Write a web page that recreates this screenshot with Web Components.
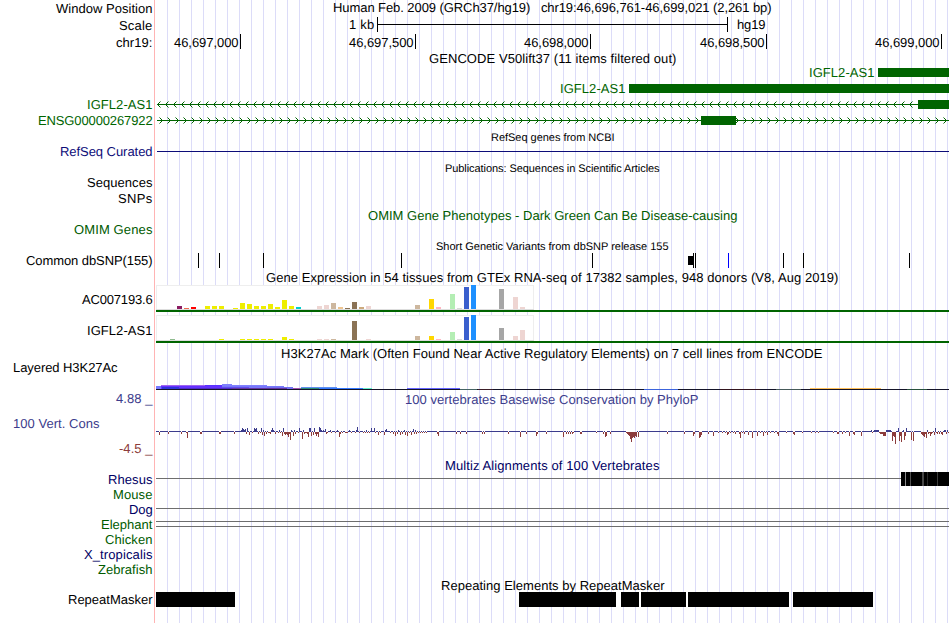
<!DOCTYPE html>
<html lang="en">
<head>
<meta charset="utf-8">
<title>Genome Browser</title>
<style>
  body {
    margin: 0;
    background: #fff;
    font-family: "Liberation Sans", Arial, sans-serif;
    font-size: 13px;
    color: #000;
  }
</style>
</head>
<body>
<genome-browser></genome-browser>

<script>
const LEFT = 155;
const RIGHT = 949;
const GREEN = '#006400';
const NAVY = '#0c0c78';

const rect = (x, y, w, h, fill = '#000') =>
  `<rect x="${x}" y="${y}" width="${w}" height="${h}" fill="${fill}"/>`;

// text fitted between two x coordinates, on one baseline
class FitText extends HTMLElement {

  constructor() {
    super();
    this.attachShadow({mode: 'open'});
  }

  connectedCallback() {
    const small = this.hasAttribute('small');
    this.shadowRoot.innerHTML = `
      <style>
        :host {
          display: block;
          height: 0;
          font-size: ${small ? 11 : 13}px;
          line-height: ${small ? 12 : 15}px;
          text-rendering: geometricPrecision;
        }
        span {
          display: block;
          width: max-content;
          white-space: pre;
        }
      </style>
      <span><slot></slot></span>
    `;
    const span = this.shadowRoot.querySelector('span');
    const width = Number(this.getAttribute('width'));
    const natural = span.getBoundingClientRect().width;
    span.style.letterSpacing = `${(width - natural) / this.textContent.length}px`;
  }
}

customElements.define('fit-text', FitText);


class TrackRow extends HTMLElement {

  constructor() {
    super();
    this.attachShadow({mode: 'open'});
  }

  set track(track) {
    this._track = track;
    this.render();
  }

  text({t, x, to, base, color = '#000', small}, origin) {
    const top = base - (small ? 9 : 12) - this._track.top;
    return `<fit-text ${small ? 'small' : ''} width="${to - x + .5}"
      style="margin: ${top}px 0 0 ${x - origin}px; color: ${color}">${t}</fit-text>`;
  }

  render() {
    const {top, height, label, texts = [], art = ''} = this._track;
    this.shadowRoot.innerHTML = `
      <style>
        :host {
          display: grid;
          grid-template-columns: ${LEFT}px ${RIGHT - LEFT}px;
          height: ${height}px;
        }
        .label {
          display: grid;
          align-content: start;
        }
        .data {
          display: grid;
          align-content: start;
        }
        .data > * {
          grid-area: 1 / 1;
        }
        svg {
          display: block;
          overflow: visible;
        }
      </style>
      <div class="label">${label ? this.text(label, 0) : ''}</div>
      <div class="data">
        <svg width="${RIGHT - LEFT}" height="${height}" viewBox="${LEFT} ${top} ${RIGHT - LEFT} ${height}" shape-rendering="crispEdges">${art}</svg>
        ${texts.map(item => this.text(item, LEFT)).join('')}
      </div>
    `;
  }
}

customElements.define('track-row', TrackRow);


function chevrons(from, to, y, dir) {
  let d = '';
  for (let x = from; x < to; x += 8) {
    d += `M${x + 3 * -dir + .5} ${y - 2.5}L${x + .5} ${y + .5}L${x + 3 * -dir + .5} ${y + 3.5}`;
  }
  return `<path d="${d}" fill="none" stroke="${GREEN}" shape-rendering="auto"/>`;
}

function expression(top, base, bars) {
  return rect(156, top, 378, base - top + 1, '#eee') +
    rect(157, top + 1, 376, base - top - 1, '#fff') +
    rect(156, base, 378, 1, '#ddd') +
    bars.map(([i, h, color]) => rect(156 + i * 7, base - h, 5, h, color)).join('') +
    rect(156, base + 1, 793, 2, GREEN);
}

const Y = '#eeee00', PINK = '#eed5d2', TAN = '#cdb79e', BROWN = '#8b7355';

const ac007 = [
  [3, 3, '#8b1c62'], [4, 1, '#ee6a50'], [5, 2, '#ff0000'], [7, 3, Y], [8, 3, Y], [9, 3, Y],
  [11, 1, Y], [12, 6, Y], [13, 5, Y], [14, 3, Y], [15, 3, Y], [16, 5, Y], [17, 2, Y], [18, 9, Y],
  [19, 3, Y], [20, 2, '#00cdcd'], [23, 3, PINK], [24, 4, PINK], [25, 6, TAN], [26, 2, '#eec591'],
  [27, 1, BROWN], [28, 7, BROWN], [29, 2, '#cdaa7d'], [30, 3, PINK], [37, 4, TAN], [39, 10, '#ffd700'],
  [40, 2, '#ffb6c1'], [42, 15, '#b4eeb4'], [43, 1, '#d9d9d9'], [44, 22, '#3a5fcd'], [45, 24, '#1e90ff'],
  [49, 20, '#a6a6a6'], [51, 12, PINK], [52, 2, PINK]
];

const igfl2 = [
  [2, 1, '#8fbc8f'], [9, 1, Y], [12, 1, Y], [13, 1, Y], [14, 1, Y], [15, 1, Y], [16, 1, Y], [18, 3, Y],
  [19, 1, Y], [23, 1, PINK], [24, 1, PINK], [25, 1, TAN], [28, 19, BROWN], [30, 1, PINK], [37, 4, TAN],
  [39, 4, '#ffd700'], [40, 1, '#ffb6c1'], [42, 8, '#b4eeb4'], [43, 1, '#d9d9d9'], [44, 23, '#3a5fcd'],
  [45, 25, '#1e90ff'], [49, 12, '#a6a6a6'], [51, 4, PINK], [52, 10, PINK]
];

// "x:height" pairs for the conservation wiggle
const up = `241:1 242:3 243:2 244:1 245:2 247:3 254:3 255:2 256:3 261:3 263:1 271:1 272:3 273:1 279:1 283:3
  291:1 294:1 299:3 303:1 309:3 310:3 314:3 319:4 320:3 321:1 323:1 325:2 330:1 337:1 349:1 356:1 357:4 366:1
  371:3 374:3 385:1 386:2 398:1 404:1 413:2 415:1 871:1 874:1 875:1 876:1 877:1 878:1 886:1 887:1 888:1 889:1
  890:1 898:3 903:1 906:3 927:1 935:3 944:1 945:1 947:1`;

const down = `159:3 168:2 181:2 186:1 187:6 200:2 201:2 219:2 220:2 234:2 246:2 249:3 252:1 258:2 260:1 262:3
  264:4 266:2 268:1 269:1 270:2 275:2 278:1 280:1 282:4 284:2 285:3 286:2 287:3 288:5 289:2 290:8 293:4 295:2
  298:1 302:7 304:2 305:1 306:1 307:2 308:5 311:4 313:3 315:2 316:4 317:2 318:5 326:2 327:1 331:1 335:1 339:5
  340:2 342:1 345:1 346:1 347:1 351:1 355:1 359:1 363:1 365:1 367:1 369:1 375:1 378:3 380:1 384:3 390:1 393:2
  395:4 397:2 400:3 402:2 405:3 407:4 409:1 411:3 414:2 416:2 418:1 420:1 422:1 424:1 426:1 437:2 438:4 456:2
  460:2 466:2 482:2 484:2 508:2 520:5 526:2 536:4 537:2 546:2 563:5 566:2 568:2 570:2 572:2 573:1 580:2 581:2
  596:1 603:2 605:5 606:4 610:2 626:1 627:2 628:3 629:4 630:7 631:10 632:6 633:5 634:6 635:4 636:5 638:5 667:2
  684:2 693:4 694:2 699:6 700:5 701:3 708:2 713:4 718:1 722:1 725:1 727:3 728:2 730:1 733:1 735:2 739:2 740:6
  742:1 744:2 748:3 752:6 757:4 760:1 763:4 765:1 767:3 770:1 774:1 777:2 778:4 786:1 793:2 794:3 802:1 811:1
  815:1 818:1 833:1 837:2 838:2 842:2 845:1 849:4 853:2 854:3 861:4 872:1 879:1 880:2 881:2 882:2 883:4 884:4
  885:4 892:9 893:4 894:5 895:12 899:9 900:4 901:10 904:8 905:4 911:8 913:9 921:2 922:3 923:4 924:5 925:2
  926:6 928:2 929:1 930:4 931:2 932:1 934:3 936:1 937:2 939:2 941:2 942:3 946:2 948:1`;

function conservation() {
  const blue = '#3c3c8c', red = '#8c3c3c';
  const parse = list => new Map(list.trim().split(/\s+/).map(pair => pair.split(':').map(Number)));
  const ups = parse(up), downs = parse(down);
  let art = '';
  for (let x = 156; x < RIGHT; x++) {
    const h = ups.get(x) || 0;
    if (downs.has(x)) {
      art += rect(x, 432, 1, downs.get(x), red);
    } else {
      art += rect(x, 431 - h, 1, h + 1, blue);
    }
  }
  return art;
}

const tick = x => rect(x, 34, 1, 15);
const snp = (x, color) => rect(x, 253, 1, 15, color);
const label = (t, x, base, color, to = 152) => ({t, x, to, base, color});
const title = (t, x, to, base, color, small) => ({t, x, to, base, color, small});
const SPECIES_A = '#000064', SPECIES_B = '#005a00', BLUE = '#3c3c8c';

const tracks = [
  {height: 17, label: label('Window Position', 56, 13),
    texts: [title('Human Feb. 2009 (GRCh37/hg19)   chr19:46,696,761-46,699,021 (2,261 bp)', 333, 771, 12)]},
  {height: 17, label: label('Scale', 119, 30),
    texts: [title('1 kb', 349, 374, 29), title('hg19', 737, 765, 29)],
    art: rect(377, 17, 1, 15) + rect(377, 24, 351, 1) + rect(727, 17, 1, 15)},
  {height: 17, label: label('chr19:', 116, 47),
    texts: [
      title('46,697,000', 174, 238, 47), title('46,697,500', 349, 413, 47), title('46,698,000', 524, 588, 47),
      title('46,698,500', 700, 764, 47), title('46,699,000', 875, 939, 47)
    ],
    art: [240, 415, 590, 766, 941].map(tick).join('')},
  {height: 13, texts: [title('GENCODE V50lift37 (11 items filtered out)', 429, 676, 63)]},
  {height: 16, texts: [title('IGFL2-AS1', 809, 874, 77, GREEN)], art: rect(878, 68, 71, 9, GREEN)},
  {height: 16, texts: [title('IGFL2-AS1', 560, 625, 93, GREEN)], art: rect(629, 84, 320, 9, GREEN)},
  {height: 16, label: label('IGFL2-AS1', 87, 109, GREEN),
    art: rect(157, 104, 792, 1, GREEN) + chevrons(157, 915, 104, -1) + rect(918, 100, 31, 9, GREEN)},
  {height: 16, label: label('ENSG00000267922', 38, 125, GREEN),
    art: rect(157, 120, 792, 1, GREEN) + chevrons(162, 949, 120, 1) + rect(701, 116, 35, 9, GREEN)},
  {height: 16, texts: [title('RefSeq genes from NCBI', 491, 614, 141, '#000', true)]},
  {height: 16, label: label('RefSeq Curated', 60, 156, NAVY), art: rect(157, 151, 792, 1, NAVY)},
  {height: 15, texts: [title('Publications: Sequences in Scientific Articles', 445, 659, 172, '#000', true)]},
  {height: 16, label: label('Sequences', 87, 187)},
  {height: 16, label: label('SNPs', 118, 203)},
  {height: 16, texts: [title('OMIM Gene Phenotypes - Dark Green Can Be Disease-causing', 368, 737, 220, SPECIES_B)]},
  {height: 15, label: label('OMIM Genes', 74, 234, SPECIES_B)},
  {height: 15, texts: [title('Short Genetic Variants from dbSNP release 155', 436, 668, 250, '#000', true)]},
  {height: 16, label: label('Common dbSNP(155)', 26, 265),
    art: [198, 219, 263, 401, 592, 693, 695, 783, 803, 909].map(x => snp(x)).join('') +
      snp(728, '#0000ff') + rect(688, 256, 6, 9)},
  {height: 16, texts: [title('Gene Expression in 54 tissues from GTEx RNA-seq of 17382 samples, 948 donors (V8, Aug 2019)', 266, 838, 282)]},
  {height: 30, label: label('AC007193.6', 82, 304), art: expression(285, 309, ac007)},
  {height: 31, label: label('IGFL2-AS1', 87, 335), art: expression(315, 340, igfl2)},
  {height: 16, texts: [title('H3K27Ac Mark (Often Found Near Active Regulatory Elements) on 7 cell lines from ENCODE', 281, 822, 358)]},
  {height: 32, label: label('Layered H3K27Ac', 13, 372, '#000', 117),
    art: rect(156, 386, 6, 3, '#7878ff') + rect(161, 385, 44, 1, '#a064f0') + rect(161, 386, 62, 3, '#6432ff') +
      rect(205, 385, 18, 1, '#5a32ff') + rect(222, 384, 10, 2, '#8080ff') + rect(232, 385, 35, 2, '#8080ff') +
      rect(222, 386, 62, 2, '#7878fa') + rect(267, 387, 26, 2, '#7070f0') + rect(162, 387, 17, 2, '#3232dc') +
      rect(179, 388, 53, 1, '#5028c8') + rect(222, 387, 27, 1, '#6050f0') + rect(232, 388, 55, 1, '#6432a0') +
      rect(293, 388, 8, 1, '#a050b0') + rect(301, 387, 36, 1, '#6090f0') + rect(301, 388, 18, 1, '#288c78') +
      rect(319, 388, 44, 1, '#3278ff') + rect(363, 388, 9, 1, '#64f0c8') + rect(407, 388, 53, 1, '#6464ff') +
      rect(156, 389, 793, 1, '#141428') + rect(460, 389, 17, 1, '#466464') + rect(478, 389, 15, 1, '#3c1e28') +
      rect(644, 389, 34, 1, '#3c64dc') + rect(720, 389, 40, 1, '#32141e') + rect(776, 389, 25, 1, '#465a5a') +
      rect(810, 388, 71, 1, '#ffc05a') + rect(907, 389, 20, 1, '#28503c')},
  {height: 18, label: label('4.88 _', 116, 403, BLUE),
    texts: [title('100 vertebrates Basewise Conservation by PhyloP', 405, 698, 404, BLUE)]},
  {height: 32, label: label('100 Vert. Cons', 13, 428, BLUE, 99), art: conservation()},
  {height: 17, label: label('-4.5 _', 119, 453, '#8c3c3c')},
  {height: 15, texts: [title('Multiz Alignments of 100 Vertebrates', 445, 659, 470, SPECIES_A)]},
  {height: 15, label: label('Rhesus', 108, 484, SPECIES_A),
    art: rect(156, 478, 745, 1, '#6e6e6e') + rect(901, 472, 48, 14) + rect(905, 472, 1, 14, '#8c8c8c') +
      rect(910, 472, 1, 14, '#505050') + rect(922, 472, 2, 14, '#464646') + rect(927, 472, 1, 14, '#282828') +
      rect(937, 472, 1, 14, '#3c3c3c')},
  {height: 15, label: label('Mouse', 113, 499, SPECIES_B)},
  {height: 15, label: label('Dog', 129, 514, SPECIES_A), art: rect(156, 508, 793, 1, '#6e6e6e')},
  {height: 15, label: label('Elephant', 101, 529, SPECIES_B),
    art: rect(156, 521, 793, 1, '#6e6e6e') + rect(156, 526, 793, 1, '#6e6e6e')},
  {height: 15, label: label('Chicken', 105, 544, SPECIES_B)},
  {height: 15, label: label('X_tropicalis', 84, 559, SPECIES_A)},
  {height: 15, label: label('Zebrafish', 98, 574, SPECIES_B)},
  {height: 15, texts: [title('Repeating Elements by RepeatMasker', 441, 664, 590)]},
  {height: 30, label: label('RepeatMasker', 68, 604),
    art: [[156, 235], [519, 616], [621, 639], [641, 686], [688, 789], [793, 873]]
      .map(([x, to]) => rect(x, 592, to - x, 15)).join('')}
];


class GenomeBrowser extends HTMLElement {

  constructor() {
    super();
    this.attachShadow({mode: 'open'});
  }

  connectedCallback() {
    // guide lines every 12px, after the red edge of the label column
    this.shadowRoot.innerHTML = `
      <style>
        :host {
          display: flex;
          flex-direction: column;
          width: 949px;
          height: 623px;
          overflow: hidden;
          background:
            linear-gradient(#ffb4b4, #ffb4b4) 154px 0 / 1px 100% no-repeat,
            linear-gradient(#fff, #fff) 0 0 / 160px 100% no-repeat,
            repeating-linear-gradient(90deg, transparent 0 11px, #dcdcf8 11px 12px);
        }
        track-row {
          flex: none;
        }
      </style>
    `;
    let top = 0;
    for (const track of tracks) {
      const row = document.createElement('track-row');
      this.shadowRoot.append(row);
      row.track = {...track, top};
      top += track.height;
    }
  }
}

customElements.define('genome-browser', GenomeBrowser);
</script>
</body>
</html>
